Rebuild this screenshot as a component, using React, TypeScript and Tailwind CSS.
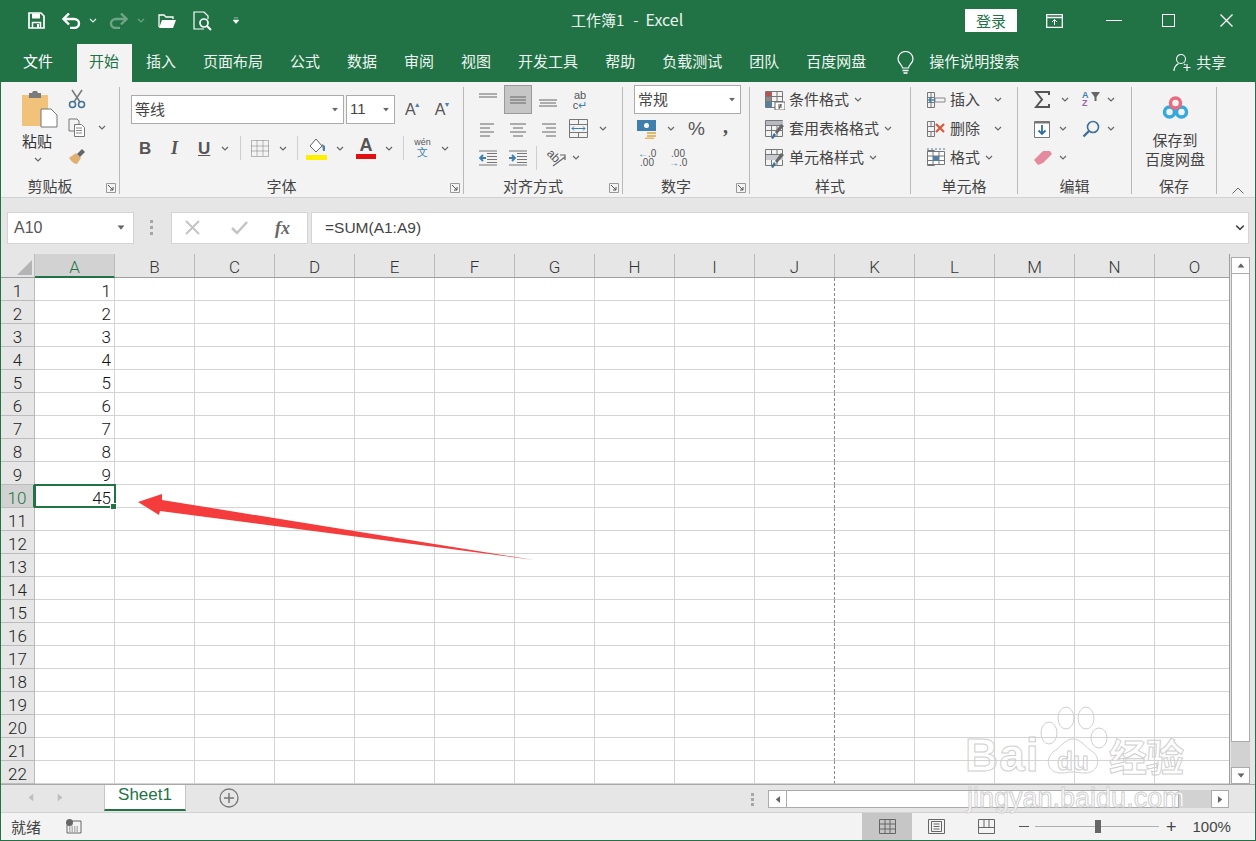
import type { ReactNode } from 'react';

const font = "font-['Microsoft_YaHei','Noto_Sans_CJK_SC',sans-serif]";

const Chev = ({ className = '', color = '#666' }: { className?: string; color?: string }) => (
  <svg width="8" height="5" viewBox="0 0 8 5" className={`shrink-0 ${className}`}>
    <path d="M1 1l3 3 3-3" fill="none" stroke={color} strokeWidth="1.2" />
  </svg>
);

const Tri = ({ className = '' }: { className?: string }) => (
  <svg width="8" height="5" viewBox="0 0 8 5" className={`shrink-0 ${className}`}>
    <path d="M0 0h8L4 5z" fill="#666" />
  </svg>
);

const Launcher = () => (
  <svg width="10" height="10" viewBox="0 0 10 10" className="shrink-0">
    <path d="M.5 9.5V.5h9v9z" fill="none" stroke="#999" />
    <path d="M2 2l5 5M7 4v3H4" fill="none" stroke="#555" />
  </svg>
);

function Group({ width, label, launcher, children }: { width: string; label: string; launcher?: boolean; children: ReactNode }) {
  return (
    <div className={`${width} shrink-0 flex flex-col border-r border-[#b9b9b9] h-[107px] mt-[5px] relative`}>
      <div className="h-[89px] -mt-[2px]">{children}</div>
      <div
        className={
          launcher
            ? 'h-[20px] flex items-center justify-center text-[15px] leading-none text-[#444] relative top-[1px] pr-[20px]'
            : 'h-[20px] flex items-center justify-center text-[15px] leading-none text-[#444] relative top-[1px]'
        }
      >
        <span>{label}</span>
      </div>
      {launcher && (
        <span className="absolute right-[3px] bottom-[1px]">
          <Launcher />
        </span>
      )}
    </div>
  );
}

const Lines = ({ y, x }: { y: number[]; x: [number, number][] }) => (
  <svg width="18" height="18" viewBox="0 0 18 18" className="shrink-0">
    {y.map((v, i) => (
      <path key={i} d={`M${x[i][0]} ${v}H${x[i][1]}`} stroke="#666" strokeWidth="1" />
    ))}
  </svg>
);

function TableIcon({ mark }: { mark: 'cond' | 'table' | 'style' }) {
  return (
    <svg width="20" height="20" viewBox="0 0 20 20" className="shrink-0">
      <path d="M.5 1.5h17v16H.5zM.5 6.5h17M.5 11.5h17M6.5 1.5v16M12 1.5v16" fill="none" stroke="#777" />
      {mark === 'cond' && (
        <>
          <path d="M1 2h5v4H1z" fill="#c0504d" />
          <path d="M1 7h5v4H1z" fill="#8a8a8a" />
          <path d="M1 12h5v5H1z" fill="#4f81a5" />
          <path d="M10 12h10v8H10z" fill="#fff" stroke="#666" />
          <path d="M13 15h4M13 17h4M16 14l-2 5" stroke="#555" fill="none" />
        </>
      )}
      {mark === 'table' && (
        <>
          <path d="M1 2h17v4H1z" fill="#b9b9c4" />
          <path d="M6 19l3-5 2 2-3 4z" fill="#3f6f96" />
          <path d="M10 13l6-8 3 2-7 8z" fill="#666" />
        </>
      )}
      {mark === 'style' && (
        <>
          <path d="M1 7h17v5H1z" fill="#c9c9d2" />
          <path d="M6 19l3-5 2 2-3 4z" fill="#3f6f96" />
          <path d="M10 13l6-8 3 2-7 8z" fill="#666" />
        </>
      )}
    </svg>
  );
}

function CellIcon({ mark }: { mark: 'insert' | 'delete' | 'format' }) {
  return (
    <svg width="20" height="20" viewBox="0 0 20 20" className="shrink-0">
      <path d="M1.5 2.5h7v5h-7zM1.5 7.5h7v5h-7zM1.5 12.5h7v5h-7zM5 2.5v5M5 12.5v5" fill="none" stroke="#777" />
      {mark === 'insert' && (
        <>
          <path d="M9 8h10v4H9z" fill="none" stroke="#888" />
          <path d="M9 10H3M5.5 7.5L3 10l2.5 2.5" fill="none" stroke="#3f7fae" strokeWidth="1.6" />
        </>
      )}
      {mark === 'delete' && <path d="M10 5l8 8M18 5l-8 8" stroke="#d9583b" strokeWidth="2.2" />}
      {mark === 'format' && (
        <>
          <path d="M1.5 3.5h17v13h-17zM7 3.5v13M13 3.5v13M1.5 8h17M1.5 12.5h17" fill="#fff" stroke="#777" />
          <path d="M7 8h6v5H7z" fill="#4f7fa8" />
          <path d="M1 1h18" stroke="#4f7fa8" strokeDasharray="2 2" />
        </>
      )}
    </svg>
  );
}

function StyleRow({ icon, text, className }: { icon: ReactNode; text: string; className: string }) {
  return (
    <div className="h-[29px] flex items-center">
      {icon}
      <span className="ml-[4px] text-[15px] text-[#444] whitespace-nowrap">{text}</span>
      <Chev className={className} />
    </div>
  );
}

const tabs = [
  { t: '插入', c: 'ml-[14px]' },
  { t: '页面布局', c: 'ml-[27px]' },
  { t: '公式', c: 'ml-[27px]' },
  { t: '数据', c: 'ml-[27px]' },
  { t: '审阅', c: 'ml-[27px]' },
  { t: '视图', c: 'ml-[27px]' },
  { t: '开发工具', c: 'ml-[27px]' },
  { t: '帮助', c: 'ml-[27px]' },
  { t: '负载测试', c: 'ml-[27px]' },
  { t: '团队', c: 'ml-[27px]' },
  { t: '百度网盘', c: 'ml-[27px]' },
];

const columns = ['A', 'B', 'C', 'D', 'E', 'F', 'G', 'H', 'I', 'J', 'K', 'L', 'M', 'N', 'O'];
const rows = Array.from({ length: 22 }, (_, i) => i + 1);

function TitleBar() {
  return (
    <div className="h-[41px] flex items-center relative text-white shrink-0">
      <svg width="17" height="17" viewBox="0 0 17 17" className="ml-[27px]">
        <path d="M1 1h12l3 3v12H1z" fill="none" stroke="#fff" strokeWidth="1.7" />
        <path d="M4 1.5h8v5H4z" fill="#fff" />
        <path d="M4.5 16v-5.5h8V16" fill="none" stroke="#fff" strokeWidth="1.5" />
        <path d="M9 12h2v4H9z" fill="#fff" />
      </svg>
      <svg width="19" height="16" viewBox="0 0 19 16" className="ml-[17px]">
        <path d="M2 6h10c3 0 5 2 5 4.500S15 15 12 15H8" fill="none" stroke="#fff" strokeWidth="2.400" />
        <path d="M7 .5L1.500 6 7 11.500" fill="none" stroke="#fff" strokeWidth="2.400" />
      </svg>
      <Chev className="ml-[8px]" color="#dfeee6" />
      <svg width="19" height="16" viewBox="0 0 19 16" className="ml-[12px] opacity-35">
        <path d="M17 6H7c-3 0-5 2-5 4.500S4 15 7 15h4" fill="none" stroke="#fff" strokeWidth="2.400" />
        <path d="M12 .5L17.500 6 12 11.500" fill="none" stroke="#fff" strokeWidth="2.400" />
      </svg>
      <Chev className="ml-[9px] opacity-35" color="#fff" />
      <svg width="19" height="16" viewBox="0 0 19 16" className="ml-[13px]">
        <path d="M1 14V2h5l2 2h7v2" fill="none" stroke="#fff" strokeWidth="1.3" />
        <path d="M1 15l3-8h14l-3 8z" fill="#fff" />
      </svg>
      <svg width="19" height="20" viewBox="0 0 19 20" className="ml-[16px]">
        <path d="M11 1H1v17h10M11 1l4 4v3" fill="none" stroke="#fff" strokeWidth="1.200" />
        <circle cx="11" cy="12" r="4" fill="none" stroke="#fff" strokeWidth="1.700" />
        <path d="M14 15l4 4" stroke="#fff" strokeWidth="2" />
      </svg>
      <svg width="6" height="7" viewBox="0 0 7 8" className="ml-[21px]">
        <path d="M1 1h5M0 3.500h7L3.500 7.500z" fill="#fff" stroke="#fff" strokeWidth=".6" />
      </svg>
      <span className="absolute left-[570px] top-[9px] text-[15px] leading-[20px] whitespace-nowrap text-[#e9f3ee]">
        工作簿1<span className="ml-[9px]">-</span>
        <span className="ml-[7px] text-[16px]">Excel</span>
      </span>
      <button className="ml-[726px] w-[52px] h-[23px] bg-white text-[#217346] text-[15px] leading-none">登录</button>
      <svg width="17" height="14" viewBox="0 0 17 14" className="ml-[29px]">
        <path d="M.7.7h15.600v12.600H.700zM.7 3.500h15.600" fill="none" stroke="#fff" strokeWidth="1.300" />
        <path d="M8.500 11V6M6 8l2.500-2.500L11 8" fill="none" stroke="#fff" />
      </svg>
      <div className="ml-[43px] w-[16px] h-[1.500px] bg-white" />
      <div className="ml-[40px] w-[13px] h-[13px] border-[1.500px] border-white" />
      <svg width="13" height="13" viewBox="0 0 13 13" className="ml-[45px]">
        <path d="M.5.5l12 12M12.500.5l-12 12" stroke="#fff" strokeWidth="1.300" />
      </svg>
    </div>
  );
}

function TabRow() {
  return (
    <div className="h-[41px] flex items-end relative shrink-0">
      <span className="ml-[22px] mb-[12px] text-[15px] leading-[18px] text-white">文件</span>
      <div className="ml-[24px] w-[55px] h-[38px] bg-[#f3f3f3] text-[#217346] text-[15px] leading-[18px] flex items-center justify-center pb-[4px] pr-[1px]">
        开始
      </div>
      {tabs.map(item => (
        <span key={item.t} className={`${item.c} mb-[12px] text-[15px] leading-[18px] text-[#eef6f1] whitespace-nowrap`}>
          {item.t}
        </span>
      ))}
      <svg width="17" height="24" viewBox="0 0 17 24" className="ml-[31px] mb-[7px]">
        <path d="M5.500 17c0-3-4.500-4.500-4.500-9a7.500 7.500 0 0115 0c0 4.500-4.500 6-4.500 9z" fill="none" stroke="#fff" strokeWidth="1.200" />
        <path d="M5.500 19.500h6M6.500 22h4" stroke="#fff" strokeWidth="1.300" />
      </svg>
      <span className="ml-[15px] mb-[12px] text-[15px] leading-[18px] text-[#eef6f1] whitespace-nowrap">操作说明搜索</span>
      <svg width="18" height="19" viewBox="0 0 18 19" className="ml-[154px] mb-[10px]">
        <circle cx="8" cy="6" r="4.500" fill="none" stroke="#fff" strokeWidth="1.100" />
        <path d="M1 18c0-4 2-6 4.500-7.500M11 11l1.500 1M14 11v7M10.500 14.500h7" fill="none" stroke="#fff" strokeWidth="1.100" />
      </svg>
      <span className="ml-[5px] mb-[11px] text-[15px] leading-[18px] text-[#eef6f1] whitespace-nowrap">共享</span>
    </div>
  );
}

function Ribbon() {
  return (
    <div className="h-[116px] bg-[#f3f3f3] border-b border-[#d2d2d2] flex relative shrink-0">
      <Group width="w-[119px]" label="剪贴板" launcher>
        <div className="flex">
          <div className="w-[67px] pl-[20px] flex flex-col pt-[2px]">
            <svg width="38" height="37" viewBox="0 0 38 37" className="mt-[4px]">
              <path d="M1 4h26v31H1z" fill="#f0c27a" />
              <path d="M8 2h3l1-2h4l1 2h3v5H8z" fill="#7b7b7b" />
              <path d="M20 18h10l6 6v12H20z" fill="#fff" stroke="#777" />
            </svg>
            <span className="text-[15px] leading-[18px] mt-[4px] pl-[1px] text-[#333]">粘贴</span>
            <Chev className="ml-[13px] mt-[7px]" />
          </div>
          <div className="flex flex-col pt-[4px]">
            <svg width="18" height="20" viewBox="0 0 18 20">
              <path d="M4 1l8 12M14 1L6 13" stroke="#777" strokeWidth="1.500" />
              <circle cx="4.500" cy="15.500" r="3" fill="none" stroke="#3f6f96" strokeWidth="1.500" />
              <circle cx="13.500" cy="15.500" r="3" fill="none" stroke="#3f6f96" strokeWidth="1.500" />
            </svg>
            <div className="flex items-center mt-[9px]">
              <svg width="18" height="19" viewBox="0 0 18 19">
                <path d="M1 1h8l2 2v3M1 1v12h5" fill="none" stroke="#777" />
                <path d="M6.500 6.500h7l3 3v9h-10z" fill="#fff" stroke="#777" />
                <path d="M8 10h6M8 12.500h6M8 15h6" stroke="#888" />
              </svg>
              <Chev className="ml-[12px]" />
            </div>
            <svg width="19" height="18" viewBox="0 0 19 18" className="mt-[10px]">
              <path d="M1 11l7-5 5 5-4 6c-3 0-6-3-8-6z" fill="#e0b070" />
              <path d="M9 7l5-5 3 3-5 5z" fill="#666" />
            </svg>
          </div>
        </div>
      </Group>

      <Group width="w-[344px]" label="字体" launcher>
        <div className="flex items-center pt-[10px] pl-[11px]">
          <div className="w-[213px] h-[29px] bg-white border border-[#ababab] flex items-center justify-between px-[3px] text-[15px] text-[#444]">
            <span>等线</span>
            <Tri className="mr-[1px] scale-75" />
          </div>
          <div className="ml-[2px] w-[49px] h-[29px] bg-white border border-[#ababab] flex items-center justify-between pl-[3px] pr-[4px] text-[15px] text-[#444]">
            <span className="font-['Liberation_Sans']">11</span>
            <Tri className="scale-75" />
          </div>
          <div className="ml-[10px] font-['Liberation_Sans'] text-[16px] leading-none text-[#555] relative">
            A<span className="absolute -right-[5px] -top-[1px] text-[7px] text-[#4f7fa8]">▲</span>
          </div>
          <div className="ml-[19px] font-['Liberation_Sans'] text-[16px] leading-none text-[#555] relative">
            A<span className="absolute -right-[5px] -top-[1px] text-[7px] text-[#4f7fa8]">▼</span>
          </div>
        </div>
        <div className="flex items-center h-[30px] mt-[9px] pl-[19px] font-['Liberation_Sans'] text-[#555]">
          <span className="w-[10px] text-[17px] font-bold leading-none">B</span>
          <span className="ml-[22px] w-[8px] font-['Liberation_Serif'] text-[18px] font-bold italic leading-none">I</span>
          <span className="ml-[19px] w-[12px] text-[17px] font-bold underline leading-none">U</span>
          <Chev className="ml-[11px]" />
          <div className="ml-[11px] h-[24px] border-l border-[#cfcfcf]" />
          <svg width="18" height="17" viewBox="0 0 18 17" className="ml-[10px]">
            <path d="M.5.5h17v16H.5zM6 .5v16M12 .5v16M.5 6h17M.5 11h17" fill="none" stroke="#777" strokeDasharray="1 1" />
          </svg>
          <Chev className="ml-[10px]" />
          <div className="ml-[10px] h-[24px] border-l border-[#cfcfcf]" />
          <svg width="21" height="24" viewBox="0 0 21 24" className="ml-[8px]">
            <path d="M4 10l6-7 6 7-6 6z" fill="#fff" stroke="#666" />
            <path d="M16 8l3 2v5l-2 0z" fill="#4f7fa8" />
            <path d="M0 19h21v5H0z" fill="#ffef00" />
          </svg>
          <Chev className="ml-[9px]" />
          <div className="ml-[12px] w-[20px] flex flex-col items-center text-[18px] font-bold leading-[17px] text-[#555]">
            <span>A</span>
            <div className="w-[20px] h-[5px] bg-[#e01010]" />
          </div>
          <Chev className="ml-[9px]" />
          <div className="ml-[10px] h-[24px] border-l border-[#cfcfcf]" />
          <div className="ml-[10px] w-[17px] flex flex-col items-center text-[9px] leading-[9px] text-[#555]">
            <span>wén</span>
            <span className="text-[11px] leading-[11px] text-[#3f7fae]">文</span>
          </div>
          <Chev className="ml-[10px]" />
        </div>
      </Group>

      <Group width="w-[159px]" label="对齐方式" launcher>
        <div className="flex flex-col pl-[15px]">
          <div className="flex items-center h-[29px]">
            <Lines y={[3, 6]} x={[[0, 18], [0, 18]]} />
            <div className="ml-[7px] w-[28px] h-[29px] bg-[#c6c6c6] border border-[#9a9a9a] flex items-center justify-center">
              <Lines y={[6, 9, 12]} x={[[1, 17], [1, 17], [1, 17]]} />
            </div>
            <div className="ml-[7px]">
              <Lines y={[9, 12, 15]} x={[[0, 18], [1, 17], [0, 18]]} />
            </div>
            <div className="ml-[14px] w-[18px] flex flex-col items-center font-['Liberation_Sans'] text-[11px] leading-[10px] text-[#555]">
              <span>ab</span>
              <span>c<span className="text-[#3f7fae]">↵</span></span>
            </div>
          </div>
          <div className="flex items-center h-[29px]">
            <Lines y={[4, 8, 12, 16]} x={[[1, 15], [1, 11], [1, 15], [1, 11]]} />
            <div className="ml-[12px]">
              <Lines y={[4, 8, 12, 16]} x={[[1, 17], [4, 14], [1, 17], [4, 14]]} />
            </div>
            <div className="ml-[12px]">
              <Lines y={[4, 8, 12, 16]} x={[[3, 17], [7, 17], [3, 17], [7, 17]]} />
            </div>
            <svg width="19" height="19" viewBox="0 0 19 19" className="ml-[12px]">
              <path d="M.5.5h18v18H.5zM.5 5.500h18M.5 13.500h18M9.500.5v5M9.500 13.500v5" fill="none" stroke="#777" />
              <path d="M3 9.500h13M5 7.500l-2 2 2 2M14 7.500l2 2-2 2" fill="none" stroke="#3f7fae" />
            </svg>
            <Chev className="ml-[11px]" />
          </div>
          <div className="flex items-center h-[29px]">
            <svg width="18" height="16" viewBox="0 0 18 16">
              <path d="M8 3.500h10M8 6.500h10M8 9.500h10M8 12.500h10M0 1h18M0 15h18" stroke="#777" />
              <path d="M7 8H1M4 5L1 8l3 3" fill="none" stroke="#3f7fae" strokeWidth="1.800" />
            </svg>
            <svg width="18" height="16" viewBox="0 0 18 16" className="ml-[12px]">
              <path d="M8 3.500h10M8 6.500h10M8 9.500h10M8 12.500h10M0 1h18M0 15h18" stroke="#777" />
              <path d="M0 8h6M3 5l3 3-3 3" fill="none" stroke="#3f7fae" strokeWidth="1.800" />
            </svg>
            <div className="ml-[9px] h-[24px] border-l border-[#cfcfcf]" />
            <div className="ml-[9px] w-[20px] h-[18px] relative">
              <span className="absolute left-[1px] top-[1px] font-['Liberation_Sans'] text-[12px] leading-none text-[#555] rotate-45">ab</span>
              <svg width="20" height="18" viewBox="0 0 20 18" className="absolute left-0 top-0">
                <path d="M7 17l12-9M14 6h5v5" fill="none" stroke="#666" strokeWidth="1.200" />
              </svg>
            </div>
            <Chev className="ml-[6px]" />
          </div>
        </div>
      </Group>

      <Group width="w-[127px]" label="数字" launcher>
        <div className="pl-[11px] flex flex-col">
          <div className="w-[107px] h-[29px] bg-white border border-[#ababab] flex items-center justify-between pl-[3px] pr-[4px] text-[15px] text-[#444]">
            <span>常规</span>
            <Tri className="scale-75" />
          </div>
          <div className="flex items-center h-[29px] pl-[3px]">
            <svg width="20" height="20" viewBox="0 0 20 20">
              <path d="M0 1h19v11H0z" fill="#3f7fae" />
              <circle cx="9.500" cy="6.500" r="2.500" fill="#fff" />
              <path d="M10 13h9v2h-9zM10 16h9v2h-9zM8 18.500h9v1.500H8z" fill="#e6b667" />
            </svg>
            <Chev className="ml-[10px]" />
            <span className="ml-[13px] font-['Liberation_Sans'] text-[19px] leading-none text-[#555]">%</span>
            <span className="ml-[18px] font-['Liberation_Serif'] font-bold text-[20px] leading-none text-[#555] relative -top-[3px]">,</span>
          </div>
          <div className="flex items-center h-[29px] pl-[4px] font-['Liberation_Sans'] text-[10px] leading-[9px] text-[#555]">
            <div className="w-[16px] text-right">
              <div>
                <span className="text-[#3f7fae]">←</span>.0
              </div>
              <div>.00</div>
            </div>
            <div className="ml-[15px] w-[16px] text-right">
              <div>.00</div>
              <div>
                <span className="text-[#3f7fae]">→</span>.0
              </div>
            </div>
          </div>
        </div>
      </Group>

      <Group width="w-[161px]" label="样式">
        <div className="pl-[15px] flex flex-col">
          <StyleRow icon={<TableIcon mark="cond" />} text="条件格式" className="ml-[5px]" />
          <StyleRow icon={<TableIcon mark="table" />} text="套用表格格式" className="ml-[5px]" />
          <StyleRow icon={<TableIcon mark="style" />} text="单元格样式" className="ml-[5px]" />
        </div>
      </Group>

      <Group width="w-[107px]" label="单元格">
        <div className="pl-[15px] flex flex-col">
          <StyleRow icon={<CellIcon mark="insert" />} text="插入" className="ml-[14px]" />
          <StyleRow icon={<CellIcon mark="delete" />} text="删除" className="ml-[14px]" />
          <StyleRow icon={<CellIcon mark="format" />} text="格式" className="ml-[5px]" />
        </div>
      </Group>

      <Group width="w-[114px]" label="编辑">
        <div className="pl-[16px] flex flex-col">
          <div className="flex items-center h-[29px]">
            <svg width="16" height="17" viewBox="0 0 16 17">
              <path d="M15 4V1H2l6 7.500L2 16h13v-3" fill="none" stroke="#555" strokeWidth="2" />
            </svg>
            <Chev className="ml-[11px]" />
            <div className="ml-[13px] w-[18px] relative h-[18px] font-['Liberation_Sans'] text-[9px] leading-[8px] font-bold">
              <div className="text-[#3f7fae]">A</div>
              <div className="text-[#a35fa8]">Z</div>
              <svg width="9" height="9" viewBox="0 0 9 9" className="absolute right-0 top-[1px]">
                <path d="M0 0h9L5.500 5v4h-2V5z" fill="#666" />
              </svg>
            </div>
            <Chev className="ml-[7px]" />
          </div>
          <div className="flex items-center h-[29px]">
            <svg width="16" height="18" viewBox="0 0 16 18">
              <path d="M.5 1.500h15v16H.5z" fill="#fff" stroke="#777" />
              <path d="M.5 1.500h15v2H.5z" fill="#777" />
              <path d="M8 5v9M4.500 10.500L8 14l3.500-3.500" fill="none" stroke="#2f6f9e" strokeWidth="1.800" />
            </svg>
            <Chev className="ml-[9px]" />
            <svg width="18" height="18" viewBox="0 0 18 18" className="ml-[15px]">
              <circle cx="11" cy="7" r="5.500" fill="none" stroke="#3f6f96" strokeWidth="1.600" />
              <path d="M7 11l-5.500 5.500" stroke="#3f6f96" strokeWidth="2.400" />
            </svg>
            <Chev className="ml-[7px]" />
          </div>
          <div className="flex items-center h-[29px]">
            <svg width="18" height="15" viewBox="0 0 18 15">
              <path d="M0 10l9-9 7 0 2 3-9 9-5 2z" fill="#e58a9e" />
            </svg>
            <Chev className="ml-[7px]" />
          </div>
        </div>
      </Group>

      <Group width="w-[85px]" label="保存">
        <div className="flex flex-col items-center pl-[2px]">
          <svg width="27" height="24" viewBox="0 0 27 24" className="mt-[11px]">
            <circle cx="7.500" cy="16" r="5" fill="none" stroke="#35a8dc" strokeWidth="3.500" />
            <circle cx="19.500" cy="16" r="5" fill="none" stroke="#35a8dc" strokeWidth="3.500" />
            <circle cx="13.500" cy="7" r="5" fill="none" stroke="#ea6a80" strokeWidth="3.500" />
          </svg>
          <span className="mt-[10px] text-[15px] leading-[19px] text-[#444]">保存到</span>
          <span className="text-[15px] leading-[20px] text-[#444]">百度网盘</span>
        </div>
      </Group>

      <svg width="12" height="7" viewBox="0 0 12 7" className="absolute left-[1231px] bottom-[3px]">
        <path d="M.5 6.500L6 1l5.500 5.500" fill="none" stroke="#666" />
      </svg>
    </div>
  );
}

function FormulaBar() {
  return (
    <div className="h-[56px] bg-[#e6e6e6] flex items-center shrink-0 pt-[3px]">
      <div className="ml-[6px] w-[127px] h-[32px] bg-white border border-[#d4d4d4] flex items-center justify-between pl-[6px] pr-[8px] font-['Liberation_Sans'] text-[16px] text-[#555]">
        <span>A10</span>
        <Tri className="scale-90" />
      </div>
      <div className="ml-[16px] w-[4px] flex flex-col gap-[3px]">
        <div className="w-[3px] h-[3px] bg-[#a6a6a6]" />
        <div className="w-[3px] h-[3px] bg-[#a6a6a6]" />
        <div className="w-[3px] h-[3px] bg-[#a6a6a6]" />
      </div>
      <div className="ml-[17px] w-[137px] h-[32px] bg-white border border-[#d4d4d4] flex items-center">
        <svg width="15" height="15" viewBox="0 0 15 15" className="ml-[13px]">
          <path d="M1 1l13 13M14 1L1 14" stroke="#c4c4c4" strokeWidth="2" />
        </svg>
        <svg width="17" height="15" viewBox="0 0 17 15" className="ml-[31px]">
          <path d="M1 8l5 5L16 2" fill="none" stroke="#c4c4c4" strokeWidth="2.500" />
        </svg>
        <span className="ml-[27px] font-['Liberation_Serif'] italic font-bold text-[18px] leading-none text-[#666]">fx</span>
      </div>
      <div className="ml-[3px] w-[938px] h-[32px] bg-white border border-[#d4d4d4] flex items-center justify-between pl-[13px] pr-[4px] text-[15.500px] text-[#444] font-['Liberation_Sans']">
        <span>=SUM(A1:A9)</span>
        <Chev className="scale-125" color="#444" />
      </div>
    </div>
  );
}

function Sheet() {
  return (
    <div className="h-[530px] flex relative bg-white shrink-0 overflow-hidden">
      <div className="w-[1229px] overflow-hidden font-['Roboto'] font-light shrink-0 border-r border-[#9e9e9e]">
        <div className="flex h-[24px] bg-[#e6e6e6] border-b border-[#9e9e9e]">
          <div className="w-[34px] shrink-0 flex items-end justify-end pr-[2px] pb-[2px] border-r border-[#bcbcbc]">
            <div className="w-0 h-0 border-l-[15px] border-l-transparent border-b-[15px] border-b-[#b4b4b4]" />
          </div>
          {columns.map(col => (
            <div
              key={col}
              className={
                col === 'A'
                  ? 'w-[80px] shrink-0 text-center text-[17px] leading-[26px] text-[#217346] bg-[#d2d2d2] border-b-2 border-[#217346] h-[24px] border-r border-r-[#bcbcbc]'
                  : 'w-[80px] shrink-0 text-center text-[17px] leading-[26px] text-[#333] border-r border-[#bcbcbc]'
              }
            >
              {col}
            </div>
          ))}
        </div>
        {rows.map(r => (
          <div key={r} className="flex h-[23px]">
            <div
              className={
                r === 10
                  ? 'w-[34px] shrink-0 bg-[#d2d2d2] border-b border-[#bcbcbc] border-r-2 border-r-[#217346] text-center text-[17px] leading-[27px] text-[#217346]'
                  : 'w-[34px] shrink-0 bg-[#e6e6e6] border-b border-r border-[#bcbcbc] text-center text-[17px] leading-[27px] text-[#222]'
              }
            >
              {r}
            </div>
            {columns.map(col => (
              <div
                key={col}
                className={
                  col === 'J'
                    ? 'w-[80px] shrink-0 border-b border-b-[#d4d4d4] border-r border-r-[#8a8a8a] [border-right-style:dashed]'
                    : 'w-[80px] shrink-0 border-b border-r border-[#d4d4d4] text-right pr-[3px] text-[17px] leading-[27px] text-[#111] relative'
                }
              >
                {col === 'A' && r < 10 && r}
                {col === 'A' && r === 10 && (
                  <>
                    45
                    <div className="absolute -left-[1px] -top-[1px] w-[82px] h-[24px] border-2 border-[#217346]" />
                    <div className="absolute -right-[3px] -bottom-[3px] w-[7px] h-[7px] bg-[#217346] border border-white z-10" />
                  </>
                )}
              </div>
            ))}
          </div>
        ))}
      </div>

      <div className="flex-1 bg-[#e6e6e6] pt-[3px] flex flex-col">
        <div className="w-[19px] ml-[1px] h-[17px] bg-white border border-[#ababab] flex items-center justify-center">
          <Tri className="rotate-180 scale-90" />
        </div>
        <div className="w-[19px] ml-[1px] h-[468px] bg-white border border-[#ababab] border-t-0" />
        <div className="w-[19px] ml-[1px] h-[25px] bg-[#d2d2d2]" />
        <div className="w-[19px] ml-[1px] h-[17px] bg-white border border-[#ababab] flex items-center justify-center">
          <Tri className="scale-90" />
        </div>
      </div>

      {/* red arrow drawn on top of the sheet */}
      <svg width="420" height="80" viewBox="0 0 420 80" className="absolute left-[130px] top-[236px] pointer-events-none">
        <path d="M7 12L31 4L31 10L403 70L29 21L28 25z" fill="#f43c3c" />
      </svg>

      {/* watermark */}
      <div className="absolute left-[964px] top-[452px] w-[225px] h-[80px] pointer-events-none font-['Liberation_Sans'] font-normal text-transparent [-webkit-text-stroke:1px_#cfcfcf]">
        <span className="absolute left-0 top-[26px] text-[46px] leading-none font-bold tracking-[1px]">Bai</span>
        <span className="absolute left-[92px] top-[42px] text-[26px] leading-none font-bold">du</span>
        <span className="absolute left-[144px] top-[30px] text-[38px] leading-none font-['Noto_Sans_CJK_SC'] font-bold tracking-[-1px] whitespace-nowrap">经验</span>
        <svg width="80" height="72" viewBox="0 0 80 72" className="absolute left-[72px] top-0">
          <ellipse cx="12" cy="27" rx="8" ry="11" fill="none" stroke="#cfcfcf" />
          <ellipse cx="29" cy="12" rx="8" ry="11" fill="none" stroke="#cfcfcf" />
          <ellipse cx="49" cy="12" rx="8" ry="11" fill="none" stroke="#cfcfcf" />
          <ellipse cx="62" cy="32" rx="8" ry="10" fill="none" stroke="#cfcfcf" />
          <path d="M36 33c8 0 12 8 20 13 8 6 6 21-8 21-5 0-8-1-12-1s-7 1-12 1C10 67 8 53 16 46c8-5 12-13 20-13z" fill="none" stroke="#cfcfcf" />
        </svg>
      </div>
    </div>
  );
}

function TabBar() {
  return (
    <div className="h-[28px] bg-[#e6e6e6] border-t border-[#a8a8a8] flex items-start relative shrink-0">
      <Tri className="rotate-90 ml-[26px] mt-[10px] opacity-30" />
      <Tri className="-rotate-90 ml-[21px] mt-[10px] opacity-30" />
      <div className="ml-[40px] w-[82px] h-[26px] bg-white border-x border-[#c6c6c6] border-b-2 border-b-[#217346] text-center font-['Liberation_Sans'] text-[17px] leading-[20px] text-[#217346]">
        Sheet1
      </div>
      <svg width="20" height="20" viewBox="0 0 20 20" className="ml-[33px] mt-[3px]">
        <circle cx="10" cy="10" r="9" fill="none" stroke="#777" strokeWidth="1.300" />
        <path d="M10 5v10M5 10h10" stroke="#777" strokeWidth="1.500" />
      </svg>
      <div className="ml-[512px] mt-[8px] flex flex-col gap-[2px]">
        <div className="w-[3px] h-[3px] bg-[#a6a6a6]" />
        <div className="w-[3px] h-[3px] bg-[#a6a6a6]" />
        <div className="w-[3px] h-[3px] bg-[#a6a6a6]" />
      </div>
      <div className="ml-[14px] mt-[5px] flex h-[18px] w-[461px] bg-[#d2d2d2]">
        <div className="w-[19px] bg-white border border-[#ababab] flex items-center justify-center">
          <Tri className="rotate-90 scale-90" />
        </div>
        <div className="w-[392px] bg-white border border-l-0 border-[#ababab]" />
        <div className="ml-auto w-[18px] bg-white border border-[#ababab] flex items-center justify-center">
          <Tri className="-rotate-90 scale-90" />
        </div>
      </div>
      <span className="absolute left-[966px] -top-[1px] font-['Liberation_Sans'] text-[27px] leading-[28px] text-[#ffffff] [-webkit-text-stroke:1px_#d0d0d0] whitespace-nowrap">
        jingyan.baidu.com
      </span>
    </div>
  );
}

function StatusBar() {
  return (
    <div className="h-[28px] bg-[#f3f3f3] border-t border-[#d2d2d2] flex items-center shrink-0 text-[#444]">
      <span className="ml-[10px] text-[15px] leading-none">就绪</span>
      <svg width="16" height="15" viewBox="0 0 16 15" className="ml-[25px]">
        <circle cx="3.500" cy="3.500" r="3.500" fill="#666" />
        <path d="M6 2h9v12H1V6" fill="none" stroke="#666" />
        <path d="M3 8h10M3 10h10M3 12h10" stroke="#777" strokeDasharray="1.500 1" />
      </svg>
      <div className="ml-[780px] w-[50px] h-[27px] bg-[#c6c6c6] flex items-center justify-center">
        <svg width="17" height="15" viewBox="0 0 17 15">
          <path d="M.5.5h16v14H.5zM6 .5v14M11 .5v14M.5 5h16M.5 10h16" fill="none" stroke="#666" />
        </svg>
      </div>
      <svg width="17" height="15" viewBox="0 0 17 15" className="ml-[16px]">
        <path d="M.5.5h16v14H.5z" fill="none" stroke="#666" />
        <path d="M3.500 2.500h10v10h-10zM5.500 5h6M5.500 7.500h6M5.500 10h6" fill="none" stroke="#666" />
      </svg>
      <svg width="17" height="15" viewBox="0 0 17 15" className="ml-[33px]">
        <path d="M.5.5h16v14H.5zM.5 8.500h16M6 .5v8M11 .5v8" fill="none" stroke="#666" />
      </svg>
      <div className="ml-[24px] w-[10px] h-[1px] bg-[#555]" />
      <div className="ml-[6px] w-[124px] h-[1px] bg-[#b0b0b0] relative">
        <div className="absolute left-[60px] -top-[6px] w-[6px] h-[13px] bg-[#666]" />
      </div>
      <span className="ml-[7px] text-[18px] leading-none font-['Liberation_Sans'] font-light">+</span>
      <span className="ml-[16px] font-['Liberation_Sans'] text-[15px] leading-none">100%</span>
    </div>
  );
}

export default function App() {
  return (
    <div className={`w-[1256px] h-[841px] overflow-hidden bg-[#217346] flex flex-col ${font} px-[1px] pb-[1px]`}>
      <TitleBar />
      <TabRow />
      <Ribbon />
      <FormulaBar />
      <Sheet />
      <TabBar />
      <StatusBar />
    </div>
  );
}
